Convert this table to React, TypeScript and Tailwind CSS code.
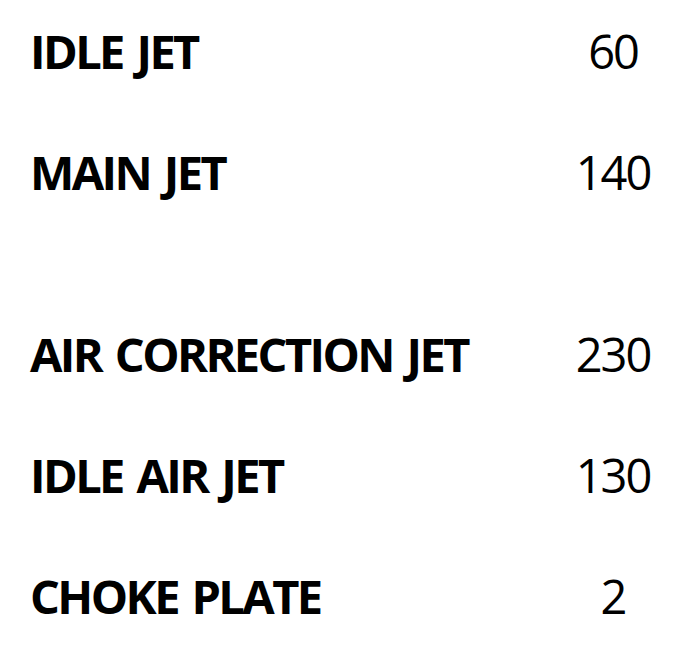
const jets = [
  { label: 'IDLE JET', value: '60' },
  { label: 'MAIN JET', value: '140' },
  { label: 'AIR CORRECTION JET', value: '230', spaced: true },
  { label: 'IDLE AIR JET', value: '130' },
  { label: 'CHOKE PLATE', value: '2' },
];

export default function App() {
  return (
    <div className="min-h-[657px] w-[698px] bg-white pl-[30px] pt-[19px] font-['Open_Sans',sans-serif] text-black">
      <div className="flex flex-col gap-[57px]">
        {jets.map((j) => (
          <div key={j.label} className={`flex items-baseline leading-[64px] ${j.spaced ? 'mt-[61px]' : ''}`}>
            <span className="w-[523px] text-[47px] font-bold tracking-[-2.6px] [word-spacing:4px]">{j.label}</span>
            <span className="w-[120px] text-center text-[47px] tracking-[-2px]">{j.value}</span>
          </div>
        ))}
      </div>
    </div>
  );
}
